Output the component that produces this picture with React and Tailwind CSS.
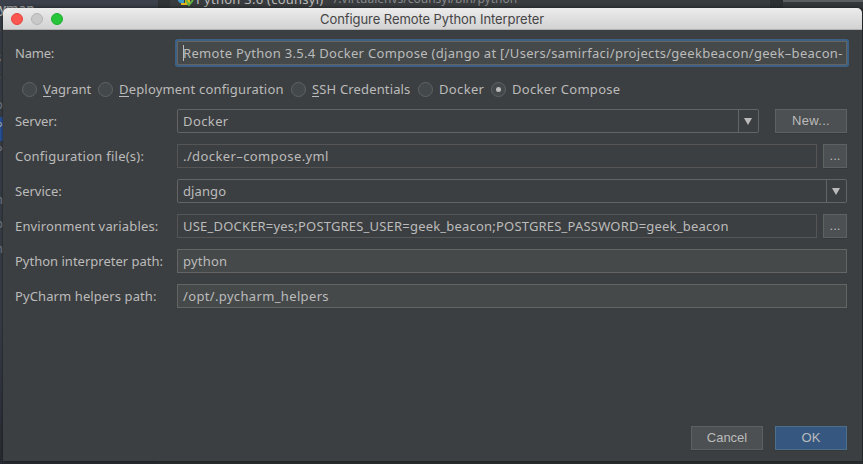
import React from "react";

const FONT = "font-['Noto_Sans','Open_Sans',sans-serif]";

function Row({ label, tracking, children }) {
  return (
    <div className="flex h-6 items-center">
      <div className={`w-[162px] shrink-0 whitespace-nowrap ${tracking}`}>{label}</div>
      {children}
    </div>
  );
}

function Field({ children, className, tracking }) {
  return (
    <div className={`flex h-6 min-w-0 items-center overflow-hidden border px-[5px] whitespace-nowrap ${className}`}>
      <span className={tracking}>{children}</span>
    </div>
  );
}

function Combo({ children, className, tracking }) {
  return (
    <div className={`flex h-6 items-stretch rounded-[2px] border border-[#646464] ${className}`}>
      <div className="flex flex-1 items-center px-[5px]">
        <span className={tracking}>{children}</span>
      </div>
      <div className="flex w-5 items-center justify-center border-l border-[#646464]">
        <svg className="mt-px mr-px" width="8" height="7" viewBox="0 0 8 7"><path d="M0 0H8L4 7Z" fill="#bbbbbb" /></svg>
      </div>
    </div>
  );
}

function Button({ children, className }) {
  return (
    <div className={`flex h-6 shrink-0 items-center justify-center border font-['Liberation_Sans',Arial,sans-serif] shadow-[0_1px_0_#353839] ${className}`}>
      {children}
    </div>
  );
}

function Radio({ mnemonic, rest, selected, className, tracking }) {
  return (
    <div className={`flex shrink-0 items-center ${className}`}>
      <span className="mr-[6px] flex size-[15px] items-center justify-center rounded-full border border-[#5f6364] bg-[#43484a]">
        {selected && <span className="size-[5px] rounded-full bg-[#bbbbbb]" />}
      </span>
      <span className={`whitespace-nowrap ${tracking}`}>
        {mnemonic && <span className="inline-block h-[15px] border-b border-[#bbbbbb] leading-[15px]">{mnemonic}</span>}
        {rest}
      </span>
    </div>
  );
}

const GREY = "border-[#5e6162] bg-[#4c5052]";
const DIM = "border-[#555555]";
const EDIT = "border-[#646464] bg-[#45494a]";

const SIDE = [
  ["r", "top-[24px]"], ["s", "top-[49px]"], ["r", "top-[71px]"], ["o.", "top-[96px]"],
  ["P", "top-[142px]"], ["[", "top-[167px]"], ["n", "top-[191px]"], ["p", "top-[215px]"], ["n", "top-[240px]"],
];

export default function App() {
  return (
    <div className={`relative h-[464px] w-[863px] overflow-hidden bg-[#2c2f31] text-[13px] leading-4 text-[#bbbbbb] ${FONT}`}>
      <div className="absolute inset-y-0 left-0 w-[158px] bg-gradient-to-b from-[#3b404a] from-70% to-[#292c34]" />
      <div className="absolute top-0 left-[158px] h-2 w-[12px] bg-[#303335]" />
      <div className="absolute top-0 left-[170px] h-2 w-[600px] bg-[#393c3e]" />
      <div className="absolute top-0 left-[783px] h-2 w-20 border-b-[6px] border-[#35383a] bg-[#5b5e60]" />
      <div className="absolute top-0 -left-[1px] text-[13px] font-semibold">yman</div>
      <svg className="absolute top-0 left-[178px]" width="16" height="8" viewBox="0 0 16 8">
        <path d="M0 0H6V3H2L0 1Z" fill="#3d99c8" />
        <path d="M3 3H7V0H12V5H3Z" fill="#e8b91d" />
        <path d="M8 0L11 5L15 0" fill="none" stroke="#62b543" strokeWidth="2" />
      </svg>
      <div className="absolute -top-[9px] left-[196px] whitespace-nowrap tracking-[0.25px]">Python 3.6 (counsyl)</div>
      <div className="absolute -top-[9px] left-[327px] text-[12px] whitespace-nowrap text-[#85888a]">~/.virtualenvs/counsyl/bin/python</div>
      <div className="absolute top-[117px] left-0 h-6 w-[3px] overflow-hidden bg-[#2856a6]"><span className="relative -left-[5px] top-[1px]">P</span></div>
      {SIDE.map(([t, top], i) => (
        <div key={i} className={`absolute -left-[5px] text-[#858991] ${top}`}>{t}</div>
      ))}

      <div className="absolute top-2 left-[3px] flex h-[453px] w-[859px] flex-col overflow-hidden rounded-t-[5px] bg-[#3c3f41] shadow-[0_0_4px_#17191b]">
        <div className="relative flex h-[22px] shrink-0 items-center border-b border-[#b2b2b2] bg-gradient-to-b from-[#ececec] to-[#d2d2d2]">
          <div className="flex gap-2 pl-2">
            <span className="size-3 rounded-full border border-[#e2443f] bg-[#fc5650]" />
            <span className="size-3 rounded-full border border-[#b4b4b4] bg-[#c9c9c9]" />
            <span className="size-3 rounded-full border border-[#1eae30] bg-[#27c63a]" />
          </div>
          <div className="mt-px ml-[257px] font-[Inter,sans-serif] text-[13px] tracking-[-0.07px] whitespace-nowrap text-[#454545]">Configure Remote Python Interpreter</div>
        </div>

        <div className="flex flex-1 flex-col pt-[11px] pr-[15px] pb-[11px] pl-3">
          <Row label="Name:" tracking="tracking-[-0.2px]">
            <div className="flex h-6 w-[670px] items-center overflow-hidden rounded-[1px] border border-[#646464] bg-[#45494a] px-[5px] whitespace-nowrap shadow-[0_0_0_2px_#3d6185]">
              <span className="-mr-px h-4 w-px shrink-0 bg-[#bbbbbb]" />
              <span className="shrink-0 tracking-[0.31px]">Remote Python 3.5.4 Docker Compose (django at [/Users/samirfaci/projects/geekbeacon/geek–beacon-</span>
            </div>
          </Row>

          <div className="relative mt-4 flex h-4 items-center pl-[7px]">
            <Radio mnemonic="V" rest="agrant" className="w-[76px]" tracking="tracking-[0px]" />
            <Radio mnemonic="D" rest="eployment configuration" className="w-[193px]" tracking="tracking-[0.18px]" />
            <Radio mnemonic="S" rest="SH Credentials" className="w-[127px]" tracking="tracking-[0.15px]" />
            <Radio rest="Docker" className="w-[73px]" tracking="tracking-[0.35px]" />
            <Radio rest="Docker Compose" selected tracking="tracking-[0.3px]" />
          </div>

          <div className="mt-3 flex flex-col gap-[11px]">
            <Row label="Server:" tracking="tracking-[-0.1px]">
              <Combo className="w-[582px]" tracking="tracking-[0.4px]">Docker</Combo>
              <Button className={`ml-4 w-[72px] tracking-[0.3px] ${GREY}`}>New...</Button>
            </Row>
            <Row label="Configuration file(s):" tracking="tracking-[0.25px]">
              <Field className={`w-[640px] ${DIM}`} tracking="tracking-[0.4px]">./docker–compose.yml</Field>
              <Button className={`ml-[6px] w-6 ${GREY}`}>...</Button>
            </Row>
            <Row label="Service:" tracking="tracking-[0px]">
              <Combo className="w-[670px]" tracking="tracking-[0.1px]">django</Combo>
            </Row>
            <Row label="Environment variables:" tracking="tracking-[0.15px]">
              <Field className={`w-[640px] ${DIM}`} tracking="tracking-[0.2px]">USE_DOCKER=yes;POSTGRES_USER=geek_beacon;POSTGRES_PASSWORD=geek_beacon</Field>
              <Button className={`ml-[6px] w-6 ${GREY}`}>...</Button>
            </Row>
            <Row label="Python interpreter path:" tracking="tracking-[0px]">
              <Field className={`w-[670px] ${EDIT}`} tracking="tracking-[0.2px]">python</Field>
            </Row>
            <Row label="PyCharm helpers path:" tracking="tracking-[0.1px]">
              <Field className={`w-[670px] ${EDIT}`} tracking="tracking-[0.35px]">/opt/.pycharm_helpers</Field>
            </Row>
          </div>

          <div className="mt-auto flex justify-end gap-3">
            <Button className={`w-[72px] ${GREY}`}>Cancel</Button>
            <Button className="w-[72px] border-[#4c708c] bg-[#365880]">OK</Button>
          </div>
        </div>
      </div>
    </div>
  );
}
